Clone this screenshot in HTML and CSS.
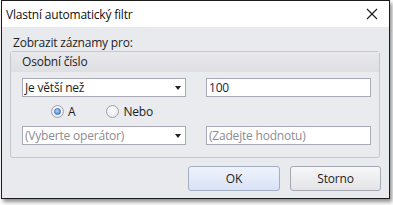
FILE: index.html
```html
<!DOCTYPE html>
<html lang="cs">
<head>
<meta charset="utf-8">
<title>Vlastní automatický filtr</title>
<link rel="stylesheet" href="styles.css">
</head>
<body>
<div class="window">
  <div class="titlebar">
    <span class="title">Vlastní automatický filtr</span>
    <svg class="close" width="12" height="12" viewBox="0 0 12 12"><path d="M1 1L11 11M11 1L1 11" stroke="#1a1a1a" stroke-width="1.1" fill="none"/></svg>
  </div>
  <div class="body">
    <div class="caption">Zobrazit záznamy pro:</div>
    <div class="group">
      <div class="group-head">Osobní číslo</div>
      <div class="group-body">
        <div class="row">
          <div class="combo"><span>Je větší než</span><span class="arrow"></span></div>
          <div class="field">100</div>
        </div>
        <div class="radios">
          <label class="radio"><span class="dot checked"></span>A</label>
          <label class="radio"><span class="dot"></span>Nebo</label>
        </div>
        <div class="row">
          <div class="combo placeholder"><span>(Vyberte operátor)</span><span class="arrow"></span></div>
          <div class="field placeholder">(Zadejte hodnotu)</div>
        </div>
      </div>
    </div>
    <div class="buttons">
      <button class="btn default">OK</button>
      <button class="btn">Storno</button>
    </div>
  </div>
</div>
</body>
</html>
```
FILE: styles.css
```css
* { box-sizing: border-box; }
html, body { margin: 0; padding: 0; background: #ffffff; }
body {
  width: 393px;
  height: 205px;
  overflow: hidden;
  font-family: "Open Sans", "Noto Sans", "Liberation Sans", sans-serif;
  font-size: 12px;
  color: #1e1e1e;
}
.window {
  margin-left: 1px;
  width: 389px;
  height: 199px;
  border: 1px solid #1c1c1c;
  background: #e9eaee;
  box-shadow: 2px 3px 4px rgba(0, 0, 0, 0.45);
  display: flex;
  flex-direction: column;
}
.titlebar {
  height: 26px;
  background: #ffffff;
  display: flex;
  align-items: center;
  justify-content: space-between;
  padding: 0 11px 0 4px;
}
.title { font-size: 12px; color: #111; letter-spacing: -0.2px; }
.close { display: block; }
.body {
  flex: 1;
  display: flex;
  flex-direction: column;
}
.caption {
  padding: 8px 0 0 11px;
  height: 24px;
  line-height: 16px;
  letter-spacing: -0.2px;
}
.group {
  margin: 0 9px 0 8px;
  border: 1px solid #c6c7cc;
  border-radius: 3px;
  background: #eaebef;
}
.group-head {
  height: 20px;
  line-height: 20px;
  padding-left: 11px;
  background: linear-gradient(#e9e9ec, #dedfe3);
  letter-spacing: -0.2px;
}
.group-body {
  padding: 6px 8px 12px 11px;
}
.row {
  display: grid;
  grid-template-columns: 164px 165px;
  column-gap: 20px;
}
.combo, .field {
  height: 19px;
  background: #ffffff;
  border: 1px solid #a9aab5;
  line-height: 17px;
  padding-left: 2px;
  letter-spacing: -0.2px;
}
.combo {
  display: flex;
  justify-content: space-between;
  align-items: center;
  padding-right: 4px;
}
.arrow {
  width: 0;
  height: 0;
  border-left: 3.5px solid transparent;
  border-right: 3.5px solid transparent;
  border-top: 4px solid #222;
}
.field { color: #1b1b4a; }
.placeholder { color: #8c8c94; }
.radios {
  height: 29px;
  display: flex;
  align-items: center;
  gap: 31px;
  padding-left: 29px;
}
.radio {
  display: flex;
  align-items: center;
  gap: 4px;
  letter-spacing: -0.2px;
}
.dot {
  width: 13px;
  height: 13px;
  border-radius: 50%;
  border: 1px solid #9ea3ad;
  background: radial-gradient(circle at 50% 40%, #ffffff, #e2e3e7);
  display: flex;
  align-items: center;
  justify-content: center;
}
.dot.checked::after {
  content: "";
  width: 7px;
  height: 7px;
  border-radius: 50%;
  background: radial-gradient(circle at 40% 35%, #b7d2f5, #3f7fd8);
  border: 1px solid #3b6fb8;
  box-sizing: border-box;
}
.buttons {
  display: flex;
  justify-content: flex-end;
  gap: 10px;
  margin: 8px 8px 0 0;
}
.btn {
  width: 91px;
  height: 25px;
  border: 1px solid #a6a9b2;
  border-radius: 3px;
  background: linear-gradient(#f7f7f8, #e4e4e7);
  font-family: inherit;
  font-size: 12px;
  color: #1e1e1e;
  padding: 0;
  letter-spacing: -0.2px;
}
.btn.default {
  width: 92px;
  border-color: #a3aec4;
  background: linear-gradient(#eef2fb, #d9e3f6);
}
```
